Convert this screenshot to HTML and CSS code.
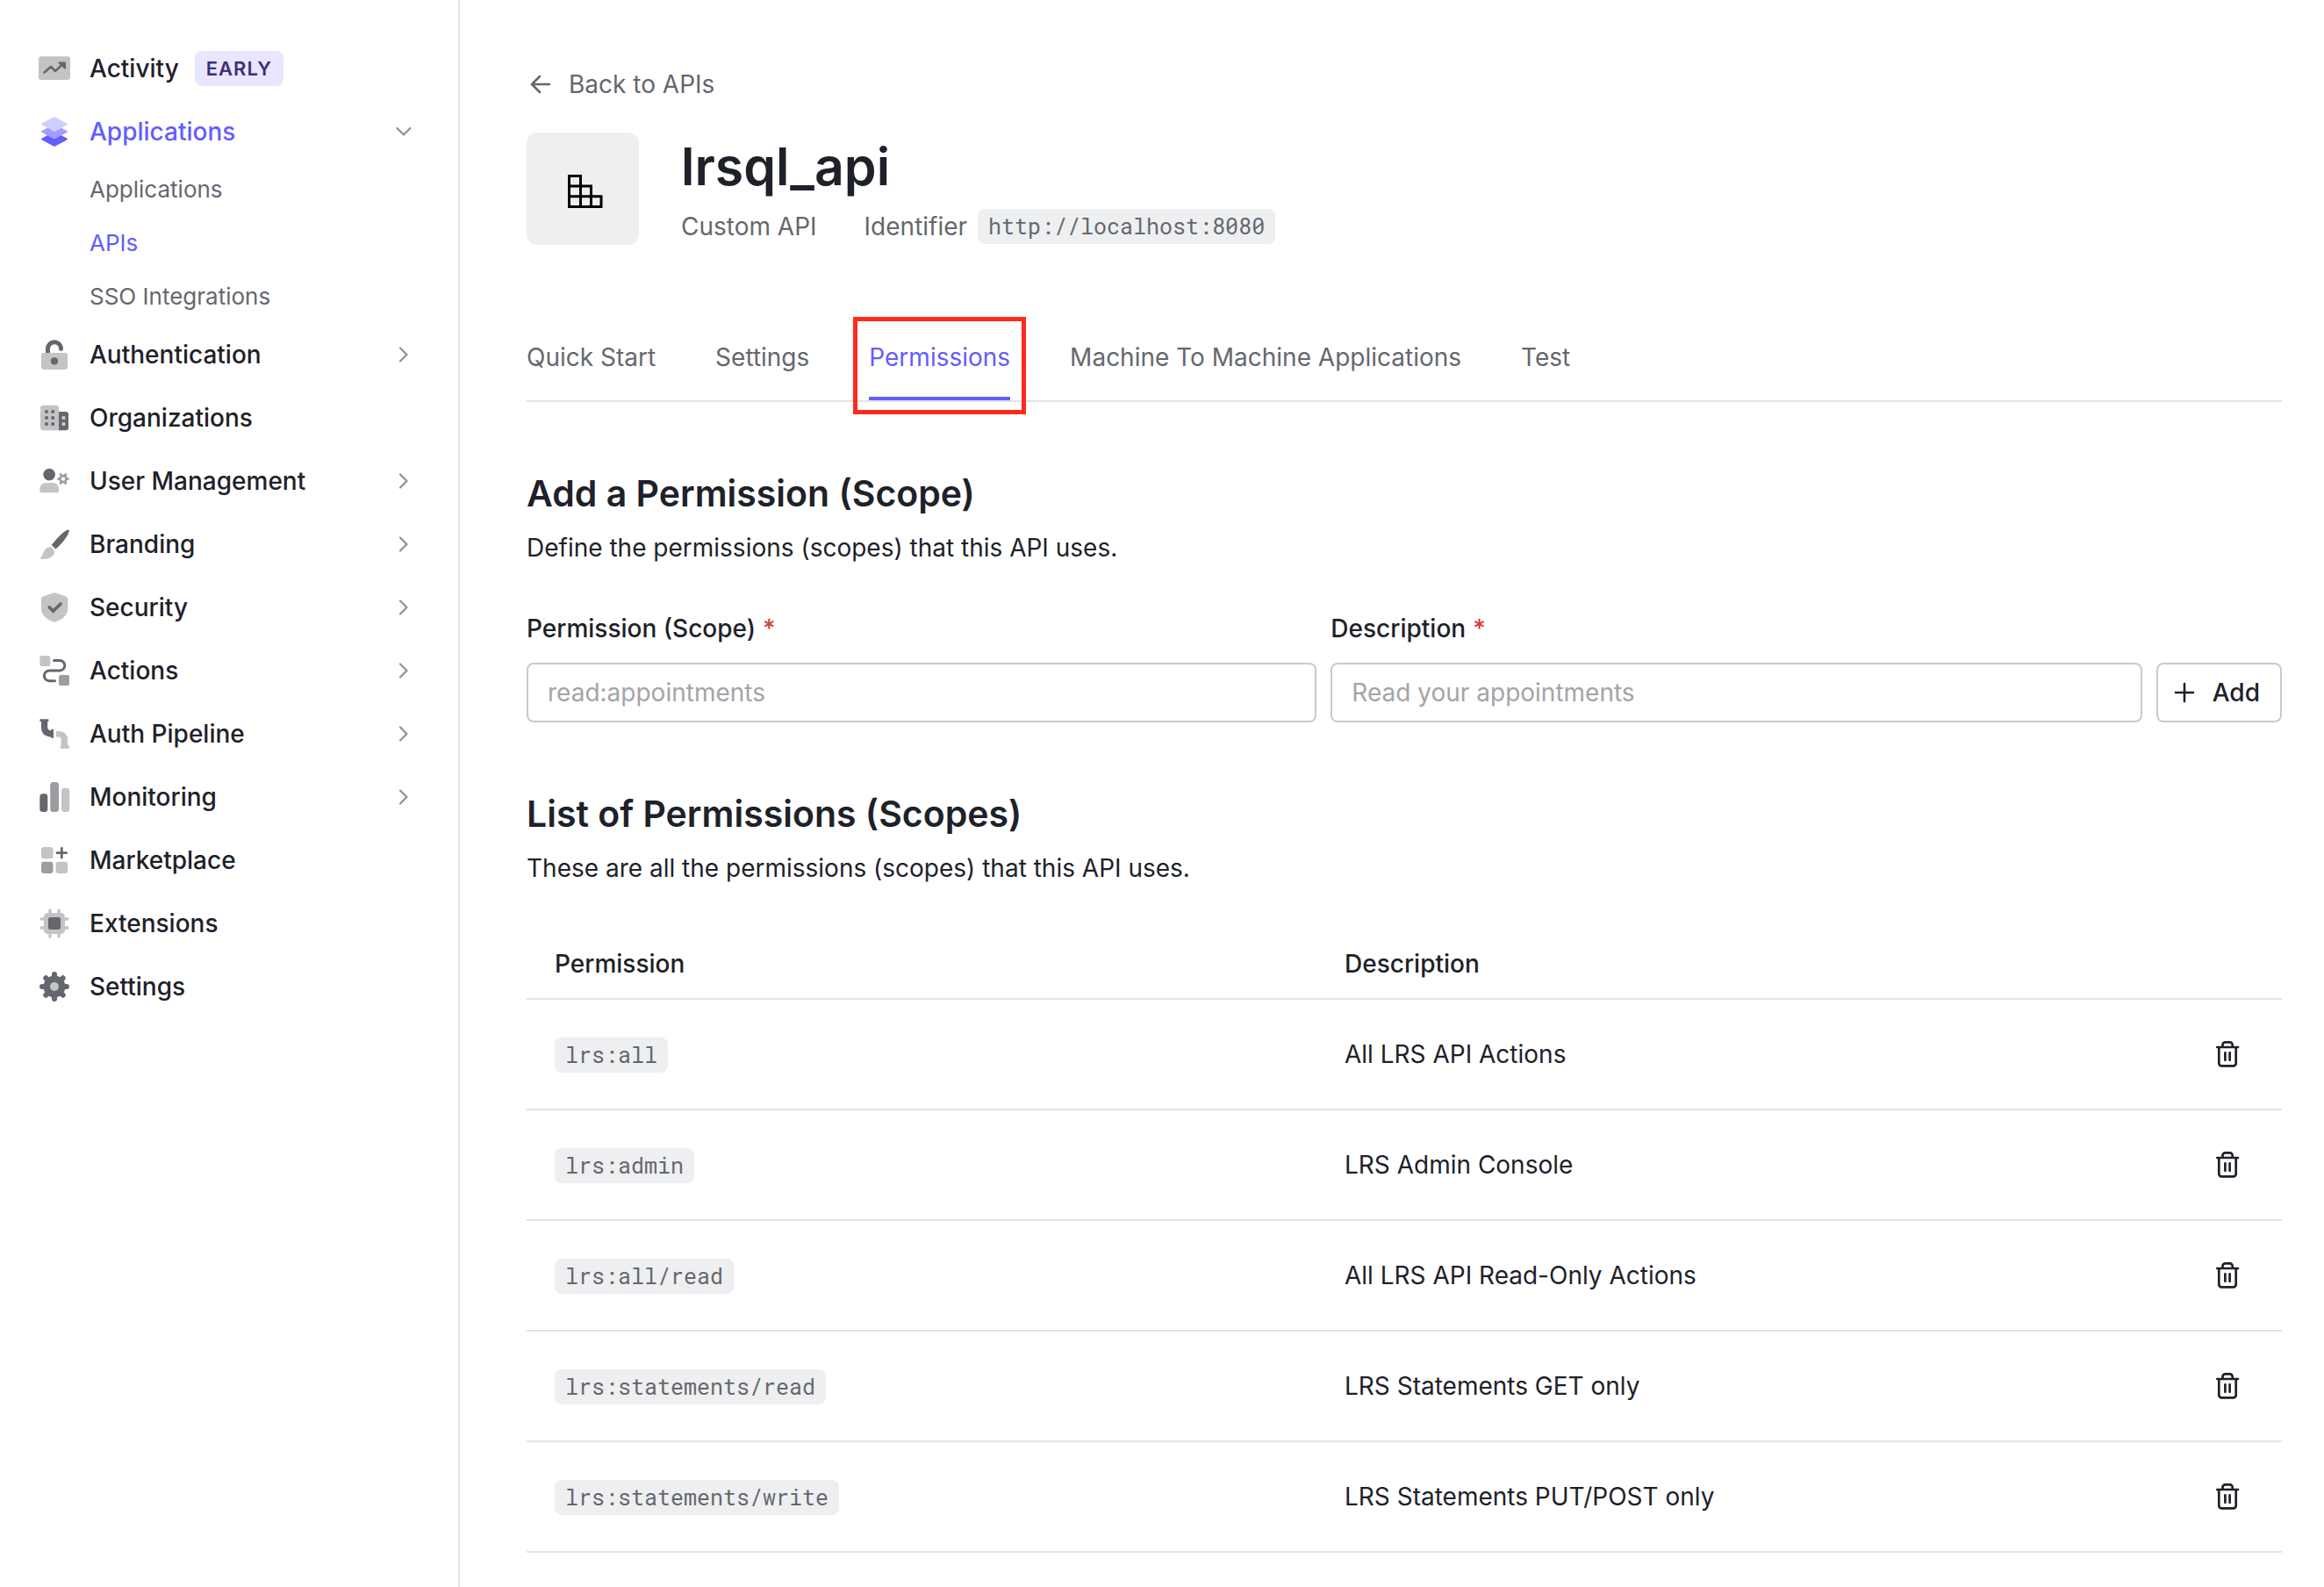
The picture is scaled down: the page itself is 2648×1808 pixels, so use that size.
FILE: index.html
```html
<!DOCTYPE html>
<html lang="en">
<head>
<meta charset="utf-8">
<title>lrsql_api – Permissions</title>
<link rel="stylesheet" href="styles.css">
</head>
<body>
<svg class="defs" aria-hidden="true">
  <symbol id="chevron" viewBox="0 0 20 20"><path d="M6 2.5 13.5 10 6 17.500" fill="none" stroke="#8f9196" stroke-width="2.200" stroke-linecap="round" stroke-linejoin="round"/></symbol>
  <symbol id="trash" viewBox="0 0 36 36"><g fill="none" stroke="#1e212a" stroke-width="2.700" stroke-linecap="round" stroke-linejoin="round"><path d="M6.300 10H30M8.300 10V28.300a3 3 0 0 0 3 3H24.700a3 3 0 0 0 3-3V10M12.500 10V7.300a3 3 0 0 1 3-3H20.700a3 3 0 0 1 3 3V10M15.400 16.300V24.800M20.600 16.300V24.800"/></g></symbol>
</svg>
<div class="layout">
  <nav class="sidebar" aria-label="Main">
    <ul class="nav">
      <li><a class="nav-item" href="#"><svg class="icon" viewBox="0 0 36 36"><rect y="4.300" width="36" height="26.700" rx="3" fill="#c4c4c4"/><path d="M6.500 22.500 14 16l5 5 8-7.500" fill="none" stroke="#65676e" stroke-width="2.600" stroke-linecap="round" stroke-linejoin="round"/><path d="M23 10.500h7q1 0 1 1v6.500q-.5 1-1.500.5l-7-6.500q-.5-1.200.5-1.500z" fill="#65676e"/></svg>Activity<span class="badge">EARLY</span></a></li>
      <li>
        <a class="nav-item active" href="#"><svg class="icon" viewBox="0 0 36 36"><path d="M3.500 25.700 17 18.500h2l13.500 7.200q1 .8 0 1.600L19 34.500q-1 .5-2 0L3.500 27.300q-1-.8 0-1.600z" fill="#635dff"/><path d="M3.500 17.200 17 10h2l13.500 7.200q1 .8 0 1.600L19 26q-1 .5-2 0L3.500 18.800q-1-.8 0-1.600z" fill="#a19eff"/><path d="M3.500 8.700 17 1.500q1-.5 2 0l13.500 7.200q1 .8 0 1.600L19 17.500q-1 .5-2 0L3.500 10.300q-1-.8 0-1.600z" fill="#d0ceff"/></svg>Applications<svg class="chevron open"><use href="#chevron"/></svg></a>
        <ul class="subnav">
          <li><a href="#">Applications</a></li>
          <li><a class="active" href="#">APIs</a></li>
          <li><a href="#">SSO Integrations</a></li>
        </ul>
      </li>
      <li><a class="nav-item" href="#"><svg class="icon" viewBox="0 0 36 36"><path d="M10.500 17V11.300a7.500 7.500 0 0 1 15-.3" fill="none" stroke="#65676e" stroke-width="5"/><circle cx="25.500" cy="11.200" r="2.500" fill="#65676e"/><rect x="3" y="16" width="30" height="19" rx="3" fill="#c4c4c4"/><circle cx="18" cy="25.400" r="4.100" fill="#65676e"/></svg>Authentication<svg class="chevron"><use href="#chevron"/></svg></a></li>
      <li><a class="nav-item" href="#"><svg class="icon" viewBox="0 0 36 36"><path d="M22 11h9q3 0 3 3v15.300q0 3-3 3h-9z" fill="#65676e"/><path d="M5 3.700h15q3 0 3 3v25.600H5q-3 0-3-3V6.700q0-3 3-3z" fill="#c4c4c4"/><path d="M7.200 9.200h3.600v3.600H7.200zM14.400 9.200H18v3.600h-3.600zM7.200 16.200h3.600v3.600H7.200zM14.400 16.200H18v3.600h-3.600zM7.200 23.200h3.600v3.600H7.200zM14.400 23.200H18v3.600h-3.600z" fill="#65676e"/><path d="M26.600 16.200h3.600v3.600h-3.600zM26.600 23.200h3.600v3.600h-3.600z" fill="#d5d5d5"/></svg>Organizations</a></li>
      <li><a class="nav-item" href="#"><svg class="icon" viewBox="0 0 36 36"><circle cx="12.100" cy="10.600" r="6.800" fill="#65676e"/><path d="M9.300 20h6q7.700 0 7.700 8v1.300q0 2-2 2H3.300q-2 0-2-2V28q0-8 8-8z" fill="#c4c4c4"/><circle cx="28" cy="15.600" r="3.500" fill="none" stroke="#9c9da1" stroke-width="2.600"/><path d="M32.500 15.600h1M30.200 19.500l.7 1.200M25.800 19.500l-.7 1.200M23.500 15.600h-1M25.800 11.700l-.7-1.200M30.200 11.700l.7-1.200" fill="none" stroke="#9c9da1" stroke-width="2.700" stroke-linecap="round"/></svg>User Management<svg class="chevron"><use href="#chevron"/></svg></a></li>
      <li><a class="nav-item" href="#"><svg class="icon" viewBox="0 0 36 36"><path d="M14.800 19C20 12 26 5.500 32.500 1.700q2.500-1 2.300 1.300C33 10 26 18 19.200 23.600z" fill="#65676e"/><path d="M13 21q5.500 2 5 6.800C16.500 34 9 35.500 2.200 34.800q-1.200-.4-.2-1.200C6 31 4.500 22 13 21z" fill="#c4c4c4"/></svg>Branding<svg class="chevron"><use href="#chevron"/></svg></a></li>
      <li><a class="nav-item" href="#"><svg class="icon" viewBox="0 0 36 36"><path d="M16.800 1.500q1.200-.4 2.400 0L31.500 5.400q1.800.6 1.800 2.600V19c0 8-6.500 12.500-14.100 15.500q-1.200.4-2.400 0C9.500 31.500 3 27 3 19V8q0-2 1.800-2.600z" fill="#c4c4c4"/><path d="M12.200 17.800l4.400 4.400L25 14" fill="none" stroke="#65676e" stroke-width="3.600" stroke-linecap="round"/></svg>Security<svg class="chevron"><use href="#chevron"/></svg></a></li>
      <li><a class="nav-item" href="#"><svg class="icon" viewBox="0 0 36 36"><rect x="1.300" y="1" width="12" height="12" rx="2" fill="#c4c4c4"/><rect x="23" y="23" width="12" height="12" rx="2" fill="#9c9da0"/><path d="M17.500 6.400H24a5.800 5.800 0 0 1 0 11.600H12.200a5.800 5.800 0 0 0 0 11.700H18.500" fill="none" stroke="#65676e" stroke-width="3" stroke-linecap="round"/></svg>Actions<svg class="chevron"><use href="#chevron"/></svg></a></li>
      <li><a class="nav-item" href="#"><svg class="icon" viewBox="0 0 36 36"><path d="M2.300 1.200h8.200q1 0 1 1v.8q0 1-1.300 1V10.500q0 3 3 3.700l1-.2q0-1 1-1.200h.8q1 0 1 1v8.200q0 1-1 1h-.8q-1-.3-1-1.300Q3 20.700 3 10.500V4Q1.300 4 1.300 3v-.8q0-1 1-1z" fill="#65676e"/><path d="M20 15h3q10 .5 10 9.500v6.800h1q1.200 0 1.200 1.200v1q0 1.200-1.200 1.200h-8.200q-1.200 0-1.200-1.200v-1q0-1.200 1-1.200V24.500q0-3-3-3H20z" fill="#c4c4c4"/></svg>Auth Pipeline<svg class="chevron"><use href="#chevron"/></svg></a></li>
      <li><a class="nav-item" href="#"><svg class="icon" viewBox="0 0 36 36"><rect x="1.300" y="14.300" width="9" height="20.700" rx="3.500" fill="#65676e"/><rect x="13.200" y="1" width="9.800" height="34" rx="3.500" fill="#9c9da0"/><rect x="26" y="7.700" width="9.200" height="27.300" rx="3.500" fill="#c4c4c4"/></svg>Monitoring<svg class="chevron"><use href="#chevron"/></svg></a></li>
      <li><a class="nav-item" href="#"><svg class="icon" viewBox="0 0 36 36"><rect x="3" y="3" width="13.500" height="13.300" rx="3" fill="#c4c4c4"/><rect x="3" y="19.700" width="13.500" height="13.300" rx="3" fill="#9c9da0"/><rect x="19.600" y="19.700" width="13.500" height="13.300" rx="3" fill="#c4c4c4"/><path d="M26.300 4.500V15M21 9.700H31.600" fill="none" stroke="#65676e" stroke-width="2.800" stroke-linecap="round"/></svg>Marketplace</a></li>
      <li><a class="nav-item" href="#"><svg class="icon" viewBox="0 0 36 36"><path d="M13 3V33M23 3V33M3 13H33M3 23H33" stroke="#c4c4c4" stroke-width="3.400" stroke-linecap="round"/><rect x="6" y="6" width="24" height="24" rx="4.500" fill="#c4c4c4"/><rect x="11" y="11" width="14" height="14" rx="2" fill="#65676e"/></svg>Extensions</a></li>
      <li><a class="nav-item" href="#"><svg class="icon" viewBox="0 0 36 36"><path d="M18 4V32M4 18H32M8.300 8.300 27.700 27.700M27.700 8.300 8.300 27.700" stroke="#65676e" stroke-width="6" stroke-linecap="round"/><circle cx="18" cy="18" r="12.500" fill="#65676e"/><circle cx="18" cy="18" r="5" fill="#c4c4c4"/></svg>Settings</a></li>
    </ul>
  </nav>
  <main class="content">
    <a class="back" href="#"><svg class="back-icon" viewBox="0 0 32 32"><path d="M26 16H6.500M15 7 6 16l9 9" fill="none" stroke="#65676e" stroke-width="2.600" stroke-linecap="round" stroke-linejoin="round"/></svg>Back to APIs</a>
    <header class="api-header">
      <div class="api-tile"><svg class="api-icon" viewBox="-7 -7 48 48"><path d="M1.500 2.500H14.500V37.500H1.500zM1.500 14H26.500V37.500M1.500 25.700H38V37.500H1.500" fill="none" stroke="#000" stroke-width="3"/></svg></div>
      <div>
        <h1>lrsql_api</h1>
        <div class="meta"><span>Custom API</span><span class="identifier">Identifier <code>http://localhost:8080</code></span></div>
      </div>
    </header>
    <nav class="tabs" aria-label="API sections">
      <a href="#">Quick Start</a>
      <a href="#">Settings</a>
      <a class="current" href="#">Permissions</a>
      <a href="#">Machine To Machine Applications</a>
      <a href="#">Test</a>
    </nav>
    <section>
      <h2>Add a Permission (Scope)</h2>
      <p>Define the permissions (scopes) that this API uses.</p>
      <form class="scope-form">
        <div class="field">
          <label for="scope">Permission (Scope)<span class="required">*</span></label>
          <input id="scope" type="text" placeholder="read:appointments">
        </div>
        <div class="field">
          <label for="description">Description<span class="required">*</span></label>
          <input id="description" type="text" placeholder="Read your appointments">
        </div>
        <button class="add" type="button"><svg class="plus" viewBox="0 0 24 24"><path d="M12 2V22M2 12H22" stroke="#1e212a" stroke-width="2.600" stroke-linecap="round"/></svg>Add</button>
      </form>
    </section>
    <section>
      <h2>List of Permissions (Scopes)</h2>
      <p>These are all the permissions (scopes) that this API uses.</p>
      <table class="scopes">
        <colgroup><col class="col-scope"><col><col class="col-action"></colgroup>
        <thead><tr><th scope="col">Permission</th><th scope="col">Description</th><td></td></tr></thead>
        <tbody>
          <tr><td><code>lrs:all</code></td><td>All LRS API Actions</td><td><button class="delete" type="button" aria-label="Delete lrs:all"><svg><use href="#trash"/></svg></button></td></tr>
          <tr><td><code>lrs:admin</code></td><td>LRS Admin Console</td><td><button class="delete" type="button" aria-label="Delete lrs:admin"><svg><use href="#trash"/></svg></button></td></tr>
          <tr><td><code>lrs:all/read</code></td><td>All LRS API Read-Only Actions</td><td><button class="delete" type="button" aria-label="Delete lrs:all/read"><svg><use href="#trash"/></svg></button></td></tr>
          <tr><td><code>lrs:statements/read</code></td><td>LRS Statements GET only</td><td><button class="delete" type="button" aria-label="Delete lrs:statements/read"><svg><use href="#trash"/></svg></button></td></tr>
          <tr><td><code>lrs:statements/write</code></td><td>LRS Statements PUT/POST only</td><td><button class="delete" type="button" aria-label="Delete lrs:statements/write"><svg><use href="#trash"/></svg></button></td></tr>
        </tbody>
      </table>
    </section>
  </main>
</div>
</body>
</html>
```

FILE: styles.css
```css
*, *::before, *::after { box-sizing: border-box; }

body {
  margin: 0;
  background: #fff;
  color: #1e212a;
  font: 400 28px/40px Inter, sans-serif;
  font-optical-sizing: none;
}

a { color: inherit; text-decoration: none; }
ul { list-style: none; margin: 0; padding: 0; }
h1, h2, p { margin: 0; }
button, input { font: inherit; color: inherit; }
.defs { display: none; }

.layout {
  display: grid;
  grid-template-columns: 524px 1fr;
  min-height: 100vh;
}

/* Sidebar */
.sidebar {
  border-right: 2px solid #e3e3e3;
  padding: 42px 52px 42px 44px;
}

.nav-item {
  display: flex;
  align-items: center;
  height: 72px;
  font-weight: 500;
}

.icon { width: 36px; height: 36px; margin-right: 22px; }
.active { color: #635dff; }
.chevron { width: 20px; height: 20px; margin-left: auto; }
.chevron.open { transform: rotate(90deg); }

.badge {
  margin-left: 18px;
  padding: 0 13px;
  border-radius: 8px;
  background: #e9e6ff;
  color: #3f2f77;
  font-size: 22px;
  font-weight: 600;
  letter-spacing: 1px;
}

.subnav {
  display: grid;
  gap: 1px;
  padding-left: 58px;
  color: #65676e;
  font-size: 26px;
}

.subnav a { display: block; line-height: 60px; }

/* Page header */
.content { padding: 76px 48px 36px 76px; }

.back {
  display: flex;
  align-items: center;
  gap: 16px;
  color: #65676e;
}

.back-icon { width: 32px; height: 32px; }

.api-header {
  display: flex;
  gap: 48px;
  margin-top: 35px;
}

.api-tile {
  display: grid;
  place-items: center;
  width: 128px;
  height: 128px;
  border-radius: 12px;
  background: #eeeff1;
}

.api-icon { width: 48px; height: 48px; }

h1 {
  font-size: 59px;
  font-weight: 600;
  line-height: 77px;
}

.meta {
  display: flex;
  gap: 54px;
  margin-top: 10px;
  color: #65676e;
}

.identifier { display: flex; gap: 12px; }

code {
  display: inline-block;
  padding: 0 12px;
  border-radius: 8px;
  background: #eeeff1;
  color: #65676e;
  font: 25px/40px "Roboto Mono", "Liberation Mono", monospace;
  vertical-align: middle;
}

/* Tabs */
.tabs {
  display: flex;
  gap: 68px;
  margin-top: 96px;
  border-bottom: 2px solid #e3e3e3;
  color: #65676e;
}

.tabs a {
  padding: 12px 0 25px;
  border-bottom: 4px solid transparent;
}

.tabs .current {
  position: relative;
  border-color: #635dff;
  color: #635dff;
}

.tabs .current::after {
  content: "";
  position: absolute;
  inset: -14px -18px -20px;
  border: 5px solid #ff2a1c;
}

/* Sections */
section { margin-top: 80px; }

h2 {
  margin-bottom: 18px;
  font-size: 41px;
  font-weight: 600;
  line-height: 48px;
}

.scope-form {
  display: grid;
  grid-template-columns: 900fr 924fr auto;
  align-items: end;
  gap: 16px;
  margin-top: 52px;
}

.field {
  display: grid;
  gap: 19px;
}

label { font-weight: 500; }

.required {
  margin-left: 8px;
  color: #d03c38;
}

input, .add {
  height: 68px;
  border: 2px solid #c9cace;
  border-radius: 8px;
  background: #fff;
}

input {
  width: 100%;
  padding: 0 22px;
}

input::placeholder { color: #a3a4a8; opacity: 1; }

.add {
  display: flex;
  align-items: center;
  gap: 20px;
  padding: 0 23px 0 18px;
  font-weight: 500;
}

.plus { width: 24px; height: 24px; }

/* Scope table */
.scopes {
  width: 100%;
  margin-top: 50px;
  border-collapse: separate;
  border-spacing: 0;
  table-layout: fixed;
}

.col-scope { width: 45%; }
.col-action { width: 112px; }

.scopes th, .scopes td {
  padding: 0 32px;
  border-bottom: 2px solid #e3e3e3;
  text-align: left;
}

.scopes th { height: 80px; font-weight: 500; }
.scopes tbody td { height: 126px; }

.scopes .delete {
  display: block;
  width: 36px;
  height: 36px;
  padding: 0;
  border: 0;
  background: none;
}

.delete svg { display: block; width: 36px; height: 36px; }
```
